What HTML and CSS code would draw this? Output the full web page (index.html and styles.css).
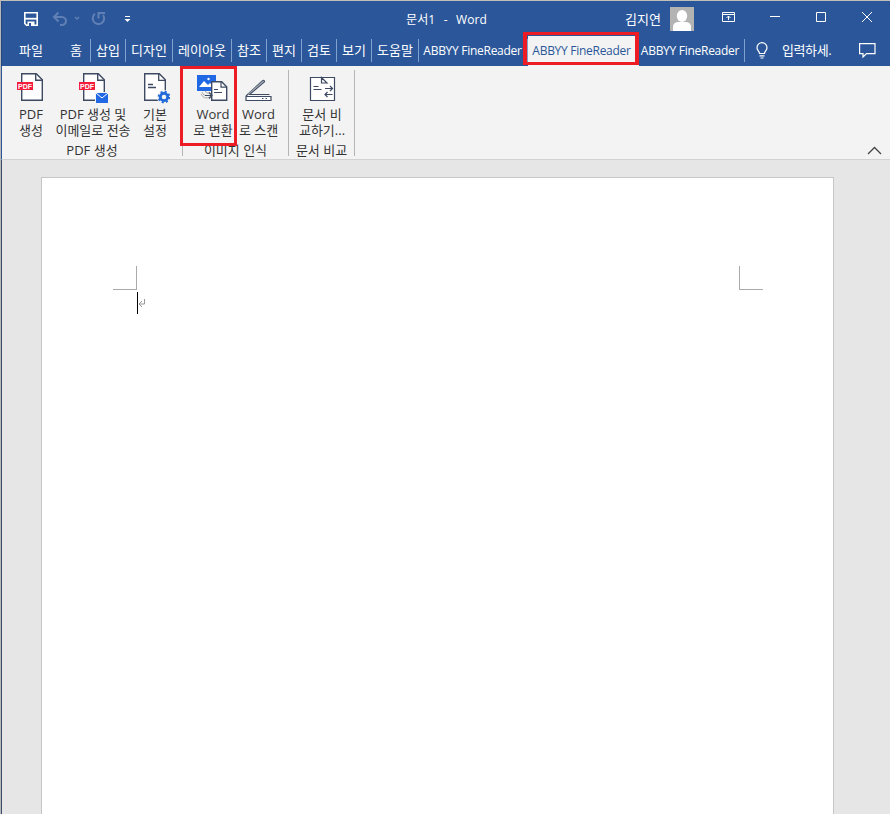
FILE: index.html
```html
<!DOCTYPE html>
<html lang="ko">
<head>
<meta charset="utf-8">
<title>문서1 - Word</title>
<link rel="stylesheet" href="styles.css">
</head>
<body>
<div class="window">
  <header class="titlebar">
    <div class="quick">
      <svg width="120" height="20" viewBox="0 0 120 20" fill="none">
        <path d="M2.800 2.800h12.400v12.400H4.500l-1.700-1.700z" stroke="#fff" stroke-width="1.600"/><path d="M3 8.700h12" stroke="#fff" stroke-width="1.800"/><path d="M5.500 11.500h7V16h-7z" fill="#fff"/><path d="M7 13h2v3H7z" fill="#2b579a"/>
        <g stroke="#6180b5" stroke-width="2"><path d="M36.500 2.500 32 7l4.500 4.500M32 7h7.500c6 0 6 8 0 8H38"/><path d="m53 7 2 2 2-2" stroke-width="1.300"/><path d="M73 3.800a5.700 5.700 0 1 0 8 1.200M76.500 8.500V3H83"/></g>
        <path d="M103 6.500h5" stroke="#fff"/><path d="M102.500 9h6l-3 3z" fill="#fff"/>
      </svg>
    </div>
    <div class="doc-title">문서1 &nbsp;<span>-</span>&nbsp; Word</div>
    <div class="user">김지연</div>
    <svg class="avatar" width="24" height="24" viewBox="0 0 24 24"><path fill="#b3b3b3" d="M0 0h24v24H0z"/><ellipse cx="12" cy="9" rx="5.200" ry="6" fill="#fff"/><path d="M3 24v-4q0-5 6-5h6q6 0 6 5v4z" fill="#fff"/></svg>
    <svg class="controls" width="156" height="20" viewBox="0 0 156 20" fill="none" stroke="#fff">
      <path d="M.5 5.500h12v9H.5zM.5 7.500h12M6.500 13V9M4.500 11l2-2 2 2M48 9.500h10M94.500 5.500h9v9h-9zM140 5l10 10m0-10-10 10"/>
    </svg>
  </header>
  <nav class="tabs">
    <div class="tab file">파일</div><div class="tab home">홈</div><div class="tab w35">삽입</div><div class="tab w47">디자인</div><div class="tab w59">레이아웃</div><div class="tab w35">참조</div><div class="tab w35">편지</div><div class="tab w35">검토</div><div class="tab w35">보기</div><div class="tab w47">도움말</div><div class="tab latin wide">ABBYY FineReader</div><div class="tab latin active">ABBYY FineReader</div><div class="tab latin last">ABBYY FineReader</div>
    <svg class="bulb" width="14" height="18" viewBox="0 0 14 18" fill="none" stroke="#fff" stroke-width="1.200"><path d="M4.500 11.500C4.500 9 2 8.500 2 5.700a5 5 0 0 1 10 0c0 2.800-2.500 3.300-2.500 5.800zM4.500 13.800h5M5.500 16h3"/></svg>
    <div class="tell">입력하세.</div>
    <svg class="comment" width="17" height="16" viewBox="0 0 17 16" fill="none" stroke="#fff" stroke-width="1.200"><path d="M.6 1.600h15.400v10H7.500L4 15v-3.400H.6z"/></svg>
  </nav>
  <section class="ribbon">
    <div class="group g-pdf">
      <div class="buttons">
        <div class="button b1"><svg width="30" height="32" viewBox="0 0 30 32" fill="none"><path d="M5.700.7h14.600l6 6v20.600H5.700z" fill="#fff" stroke="#3e4a61" stroke-width="1.400"/><path d="M19.700.7v6.600h6.600" stroke="#3e4a61" stroke-width="1.400"/><path d="M1 9h16v8H1z" fill="#f51d3c"/><text class="pdf" x="2" y="15.800">PDF</text></svg><span>PDF<br>생성</span></div>
        <div class="button b2"><svg width="30" height="32" viewBox="0 0 30 32" fill="none"><path d="M5.700.7h14.600l6 6v20.600H5.700z" fill="#fff" stroke="#3e4a61" stroke-width="1.400"/><path d="M19.700.7v6.600h6.600" stroke="#3e4a61" stroke-width="1.400"/><path d="M1 9h16v8H1z" fill="#f51d3c"/><text class="pdf" x="2" y="15.800">PDF</text><path d="M17 19h13v11H17z" fill="#f3f3f3"/><path d="M18 20h12v10H18z" fill="#2168e5"/><path d="m18 20 6 5 6-5" stroke="#fff"/></svg><span>PDF 생성 및<br>이메일로 전송</span></div>
        <div class="button b3"><svg width="30" height="32" viewBox="0 0 30 32" fill="none"><path d="M4.700.7h14.600l6 6v20.600H4.700z" fill="#fff" stroke="#3e4a61" stroke-width="1.400"/><path d="M18.700.7v6.600h6.600M8 11.500h5M8 14.500h8" stroke="#3e4a61" stroke-width="1.300"/><circle cx="24" cy="24" r="7" fill="#f3f3f3"/><circle cx="24" cy="24" r="3.700" stroke="#2168d8" stroke-width="2.800"/><circle cx="24" cy="24" r="5.400" stroke="#2168d8" stroke-width="1.800" stroke-dasharray="2.100 2.140"/></svg><span>기본<br>설정</span></div>
      </div>
      <div class="label">PDF 생성</div>
    </div>
    <div class="group g-image">
      <div class="buttons">
        <div class="button b4"><svg width="32" height="32" viewBox="0 0 32 32" fill="none"><path d="M0 2h19v16H0z" fill="#2168e5"/><path d="m2 14 5-6 4 4 2-2 4 4z" fill="#fff"/><circle cx="11.500" cy="6" r="1.200" fill="#fff"/><path d="M14.700 8.700h10l5 5v13.600h-15z" fill="#fff" stroke="#3e4a61" stroke-width="1.400"/><path d="M24 8.700v5.500h5.500M17 16.500h4M17 19.500h8" stroke="#3e4a61" stroke-width="1.200"/><path d="M5 19q1 4 6 3.500M8 18q1 3 5 2M4 21q3 6 9 3" stroke="#aaa"/><path d="M8 22.500h7m-3-3 3 3-3 3" stroke="#3e4a61" stroke-width="1.200"/></svg><span>Word<br>로 변환</span></div>
        <div class="button b5"><svg width="28" height="32" viewBox="0 0 28 32" fill="none" stroke="#3e4a61" stroke-width="1.200"><path d="M1 23.500h25v4H1z" fill="#fff"/><path d="M1 23 17.500 7.800q2-1 2 1L4.500 21.500h20"/><path d="M3 21.500 18.500 8" stroke="#99a0ab"/><path d="M17 25.500h1.500m2 0H22"/></svg><span>Word<br>로 스캔</span></div>
      </div>
      <div class="label">이미지 인식</div>
    </div>
    <div class="group g-compare">
      <div class="buttons">
        <div class="button b6"><svg width="28" height="32" viewBox="0 0 28 32" fill="none" stroke="#3e4a61" stroke-width="1.200"><path d="M2.500 4.500h24v23h-24z" fill="#fff"/><path d="M13.500 4.500V10h5.500zM5.500 13.500h5M5.500 16.500h8M17 15.500h7.500m-2.500-2.500 2.500 2.500-2.500 2.500M24.500 21.500H17m2.500-2.500-2.500 2.500 2.500 2.500"/></svg><span>문서 비<br>교하기...</span></div>
      </div>
      <div class="label">문서 비교</div>
    </div>
    <svg class="collapse" width="15" height="9" viewBox="0 0 15 9" fill="none" stroke="#444" stroke-width="1.300"><path d="m1 8 6.500-6.500L14 8"/></svg>
  </section>
  <main class="canvas">
    <article class="page">
      <i class="corner left"></i><i class="corner right"></i>
      <p class="line"><i class="caret"></i><svg width="8" height="9" viewBox="0 0 8 9" fill="none" stroke="#999"><path d="M6.500 0v5H1m3-3-3 3 3 3"/></svg></p>
    </article>
  </main>
</div>
<div class="mark mark-tab"></div>
<div class="mark mark-button"></div>
</body>
</html>
```
FILE: styles.css
```css
* { box-sizing: border-box; }
body {
  margin: 0;
  width: 890px;
  height: 814px;
  overflow: hidden;
  background: #c0c0b8;
  font: 13px/16px "Open Sans", "Noto Sans CJK KR", sans-serif;
  color: #333;
}
svg { display: block; flex: none; }
.window {
  height: 814px;
  padding-top: 1px;
  border-left: 1px solid #b8b8b8;
  display: flex;
  flex-direction: column;
}
.titlebar {
  flex: none;
  height: 34px;
  display: flex;
  align-items: flex-start;
  background: #2b579a;
  color: #fff;
  border-left: 1px solid #24477d;
  font-size: 12px;
}
.quick { width: 404px; padding: 9px 0 0 20px; }
.doc-title { width: 219px; padding-top: 11px; white-space: nowrap; letter-spacing: 0.1px; }
.doc-title span { margin: 0 2px; }
.user { width: 45px; padding-top: 10px; font-size: 13px; }
.avatar { margin-top: 6px; }
.controls { margin: 6px 0 0 28px; }
.tabs {
  flex: none;
  height: 31px;
  display: flex;
  background: #2b579a;
  color: #fff;
  border-left: 1px solid #24477d;
}
.tab {
  height: 23px;
  margin-top: 4px;
  line-height: 22px;
  text-align: center;
  white-space: nowrap;
  border-right: 1px solid #7fa3cf;
  flex: none;
}
.file { width: 58px; border: 0; }
.home { width: 31px; padding-left: 2px; }
.w35 { width: 35px; }
.w47 { width: 47px; }
.w59 { width: 59px; }
.latin { font-size: 12px; letter-spacing: -0.28px; line-height: 24px; }
.wide { width: 109px; padding-right: 1px; }
.active {
  width: 111px;
  height: 30px;
  margin-top: 1px;
  padding-right: 4px;
  line-height: 30px;
  background: #f3f3f3;
  color: #2b579a;
  border: 0;
}
.last { width: 106px; padding-right: 3px; }
.bulb { margin: 7px 0 0 10px; }
.tell { width: 87px; padding: 7px 0 0 13px; white-space: nowrap; letter-spacing: -0.4px; }
.comment { margin: 7px 0 0 3px; }
.ribbon {
  flex: none;
  height: 94px;
  display: flex;
  background: #f3f3f3;
  border-left: 1px solid #2b579a;
  border-bottom: 1px solid #d2d2d2;
}
.group {
  height: 86px;
  margin-top: 4px;
  border-right: 1px solid #b5b5b5;
}
.g-pdf { width: 181px; }
.g-image { width: 106px; }
.g-compare { width: 66px; }
.buttons { display: flex; height: 72px; padding-top: 3px; }
.button {
  flex: none;
  display: flex;
  flex-direction: column;
  align-items: center;
  gap: 1px;
  text-align: center;
  white-space: nowrap;
}
.b1 { width: 58px; }
.b2 { width: 66px; }
.b3 { width: 58px; }
.b4 { width: 60px; }
.b5 { width: 31px; }
.b6 { width: 66px; }
.label { text-align: center; white-space: nowrap; }
.pdf { font: bold 7px "Liberation Sans", sans-serif; fill: #fff; }
.collapse { margin: 80px 0 0 512px; }
.canvas {
  flex: 1;
  min-height: 0;
  overflow: hidden;
  padding: 17px 0 0 39px;
  background: #e6e6e6;
  border-left: 1px solid #3a4c68;
}
.page {
  position: relative;
  width: 793px;
  height: 640px;
  padding: 114px 0 0 95px;
  background: #fff;
  border: 1px solid #c6c6c6;
  border-bottom: 0;
}
.corner {
  position: absolute;
  top: 88px;
  width: 24px;
  height: 24px;
  border-bottom: 1px solid #aaa;
}
.left { left: 71px; border-right: 1px solid #aaa; }
.right { right: 70px; border-left: 1px solid #aaa; }
.line { display: flex; align-items: center; margin: 0; height: 22px; }
.caret { width: 1px; height: 22px; background: #000; }
.mark { position: absolute; border: 3px solid #ed1c24; }
.mark-tab { left: 523px; top: 32px; width: 116px; height: 33px; border-width: 3px 4px; }
.mark-button { left: 180px; top: 66px; width: 57px; height: 80px; }
```
